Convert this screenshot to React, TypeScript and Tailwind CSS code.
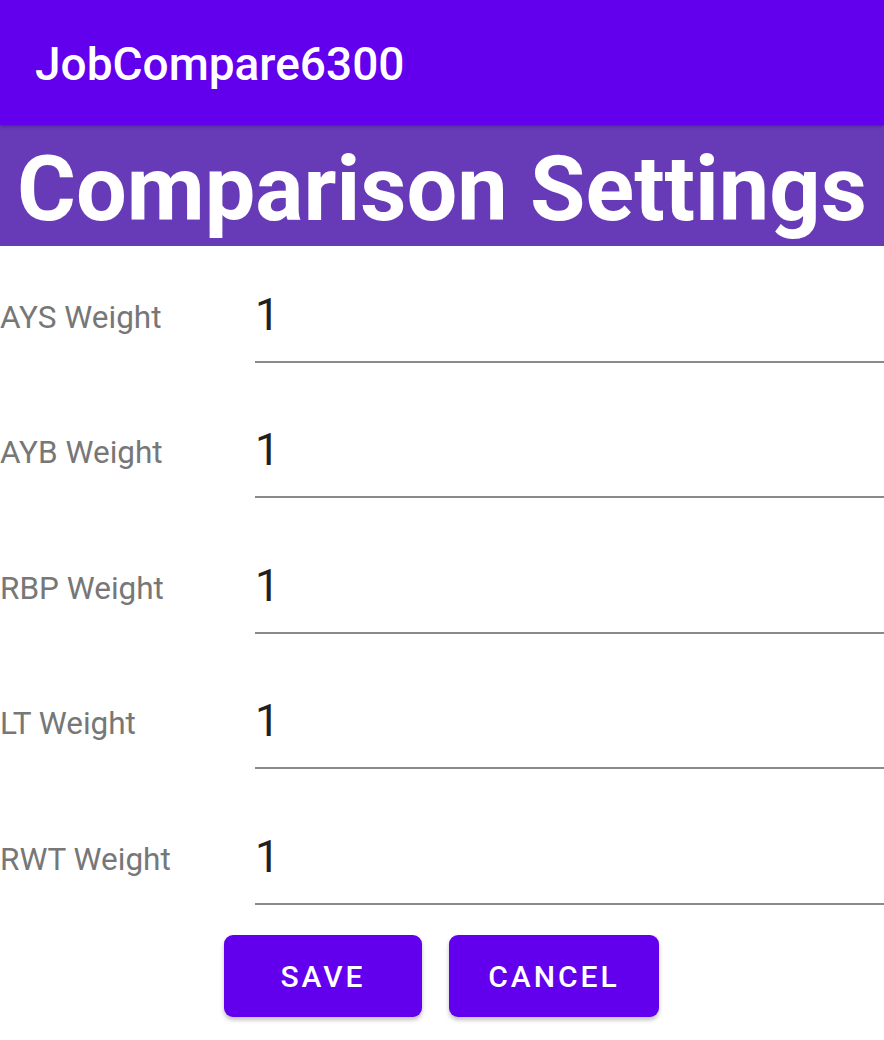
const weights = ['AYS Weight', 'AYB Weight', 'RBP Weight', 'LT Weight', 'RWT Weight'];

const WeightRow: React.FC<{ label: string; value: string }> = ({ label, value }) => {
    return (
        <div className="flex h-[135.5px]">
            <div className="w-[255px] pt-[56px] text-[31.5px] leading-none text-[#777777]">{label}</div>
            <div className="flex-1 h-[117px] border-b-2 border-[#8a8a8a] pt-[47px] text-[44px] leading-none text-[#212121]">
                {value}
            </div>
        </div>
    );
};

export default function App() {
    return (
        <div className="w-[884px] h-[1040px] bg-white font-['Roboto',sans-serif] overflow-hidden">
            <div className="relative z-10 h-[124.5px] bg-[#6200ee] pl-[35px] pt-[41px] shadow-[0_1px_3px_rgba(0,0,0,0.35)]">
                <div className="text-[46px] font-medium leading-none text-white">JobCompare6300</div>
            </div>
            <div className="h-[121px] bg-[#673ab7] pt-[20px] text-center">
                <div className="text-[90px] font-bold leading-none text-white">Comparison Settings</div>
            </div>
            <div>
                {weights.map((w) => (
                    <WeightRow key={w} label={w} value="1" />
                ))}
            </div>
            <div className="flex justify-center gap-[27px] pt-[12px] pr-[1px]">
                <button className="w-[198px] h-[82px] rounded-[9px] bg-[#6200ee] text-white text-[30px] font-medium tracking-[0.1em] shadow-[0_3px_4px_rgba(0,0,0,0.25)]">
                    SAVE
                </button>
                <button className="w-[210px] h-[82px] rounded-[9px] bg-[#6200ee] text-white text-[30px] font-medium tracking-[0.1em] shadow-[0_3px_4px_rgba(0,0,0,0.25)]">
                    CANCEL
                </button>
            </div>
        </div>
    );
}
